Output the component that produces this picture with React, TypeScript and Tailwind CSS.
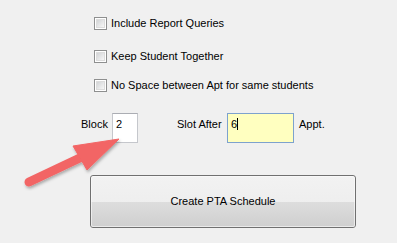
const checks = [
  { label: "Include Report Queries", mt: "mt-[17px]" },
  { label: "Keep Student Together", mt: "mt-[20px]" },
  { label: "No Space between Apt for same students", mt: "mt-[16px]" },
];

function CheckBox() {
  return (
    <span className="w-[13px] h-[13px] border border-[#8e8f8f] bg-white p-[1px] shrink-0">
      <span className="block w-full h-full bg-gradient-to-br from-[#d2d4d6] to-[#f7f7f7] border border-[#dcdcdc]" />
    </span>
  );
}

function Arrow() {
  return (
    <svg
      className="absolute left-0 top-0 pointer-events-none"
      width="397"
      height="243"
      viewBox="0 0 397 243"
    >
      <defs>
        <filter id="sh" x="-20%" y="-20%" width="140%" height="140%">
          <feDropShadow dx="1" dy="2" stdDeviation="1.5" floodColor="#000" floodOpacity="0.3" />
        </filter>
      </defs>
      <g filter="url(#sh)" fill="#f26565" stroke="#f26565">
        <line x1="29" y1="182" x2="84" y2="156" strokeWidth="9" strokeLinecap="round" />
        <polygon points="119,139 73,146 87,170" strokeWidth="1" strokeLinejoin="round" />
      </g>
    </svg>
  );
}

export default function App() {
  return (
    <div
      className="relative w-[397px] h-[243px] bg-[#f0f0f0] text-black text-[11px] overflow-hidden"
      style={{ fontFamily: '"Liberation Sans", Arial, sans-serif' }}
    >
      {/* checkbox options */}
      <div className="flex flex-col pl-[94px]">
        {checks.map(({ label, mt }) => (
          <div key={label} className={`flex items-center h-[13px] gap-[4px] ${mt}`}>
            <CheckBox />
            <span className="leading-none">{label}</span>
          </div>
        ))}
      </div>

      {/* block / slot row */}
      <div className="flex items-start mt-[21px] pl-[81px] h-[30px]">
        <span className="w-[31px] mt-[6px] leading-none">Block</span>
        <div className="w-[26px] h-[30px] bg-white border border-[#c5c7cc] border-t-[#abadb3] pl-[3px] pt-[5px] leading-none">
          2
        </div>
        <span className="w-[50px] ml-[39px] mt-[6px] leading-none">Slot After</span>
        <div className="w-[67px] h-[30px] bg-[#ffffc0] border border-[#7da2ce] pl-[3px] pt-[5px] leading-none flex items-start">
          <span>6</span>
          <span className="w-px h-[12px] bg-black -mt-[1px]" />
        </div>
        <span className="ml-[5px] mt-[6px] leading-none">Appt.</span>
      </div>

      {/* button */}
      <div className="pl-[90px] mt-[32px]">
        <button className="w-[266px] h-[53px] rounded-[3px] border border-[#707070] bg-gradient-to-b from-[#f2f2f2] to-[#ebebeb] relative overflow-hidden">
          <span className="absolute left-0 right-0 top-1/2 bottom-0 bg-gradient-to-b from-[#dddddd] to-[#cfcfcf]" />
          <span className="absolute inset-0 border border-[#fcfcfc]/60 rounded-[2px]" />
          <span className="relative">Create PTA Schedule</span>
        </button>
      </div>

      <Arrow />
    </div>
  );
}
